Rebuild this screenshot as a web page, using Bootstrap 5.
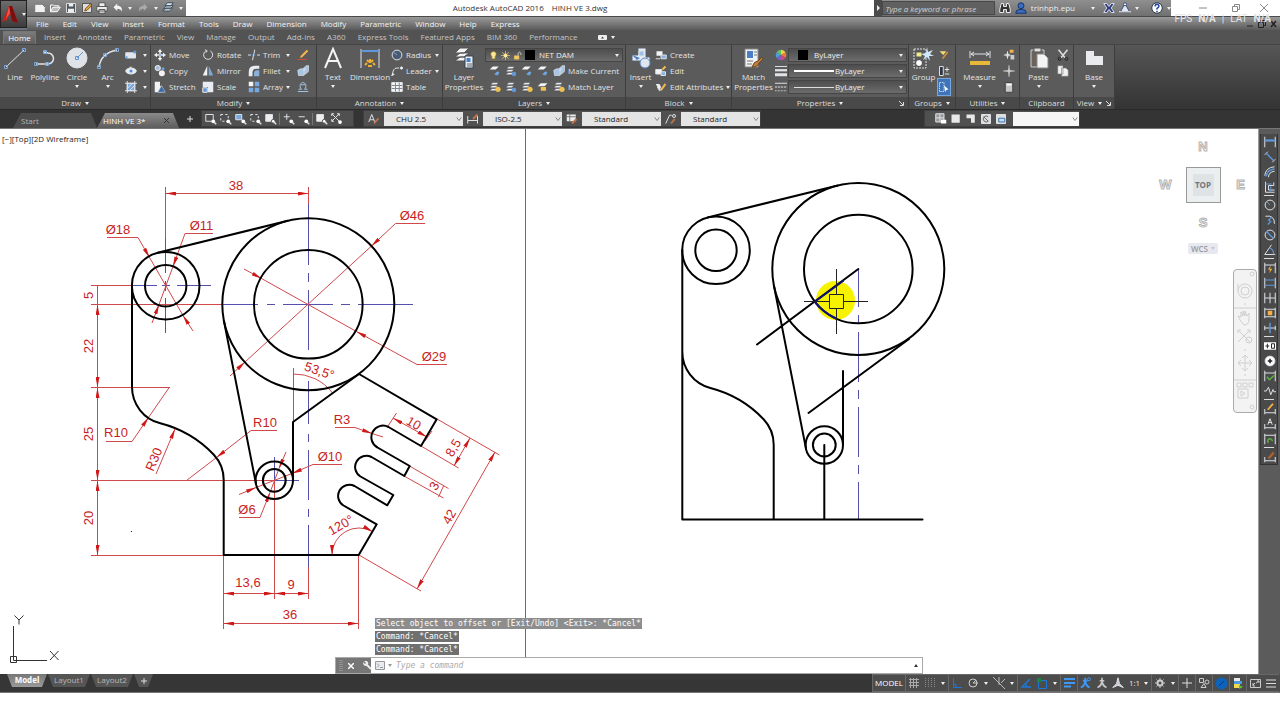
<!DOCTYPE html>
<html lang="en">
<head>
<meta charset="utf-8">
<meta name="viewport" content="width=device-width, initial-scale=1">
<title>Autodesk AutoCAD 2016 - HINH VE 3.dwg</title>
<link href="https://cdn.jsdelivr.net/npm/bootstrap@5.3.0/dist/css/bootstrap.min.css" rel="stylesheet">
<script src="https://cdn.jsdelivr.net/npm/bootstrap@5.3.0/dist/js/bootstrap.bundle.min.js"></script>
<style>
  :root { --ui: "Open Sans", "Noto Sans", sans-serif; --edge: #3d3d3d; --ink: #e4e4e4; }
  body { font: 8px/12px var(--ui); color: var(--ink); background: #fff; padding-bottom: 27px; overflow-x: hidden; }
  svg { display: block; flex: none; }
  .ic { width: 12px; height: 12px; fill: none; stroke: #dfe3e8; stroke-width: 1.3; }
  .ic-lg { width: 22px; height: 22px; fill: none; stroke: #dfe3e8; stroke-width: 1; }
  .tool, .tool:hover { --bs-btn-hover-color: #fff; padding: 0; border: 0; border-radius: 0; font: inherit; color: inherit; display: flex; align-items: center; white-space: nowrap; background: none; }
  .dn { width: 0; height: 0; border: solid transparent; border-width: 3px 2px 0; border-top-color: #eee; flex: none; }
  a { color: inherit; text-decoration: none; }

  /* title bar and menus */
  .app-btn, .app-btn:hover { width: 27px; height: 28px; border: 1px solid #222; background: linear-gradient(#6d6d6d, #3c3c3c); }
  .title-row { height: 16px; background: #fff; color: #333; }
  .qat { width: 159px; background: linear-gradient(#8b8b8b, #6f6f6f); padding-left: 5px; }
  .qat .tool { width: 16px; justify-content: center; }
  .qat .slim { width: 10px; }
  .info { width: 297px; background: linear-gradient(#8f8f8f, #707070); color: #eee; }
  .info .arrow { width: 9px; height: 16px; justify-content: center; background: #4b4b4b; }
  .find { width: 120px; height: 14px; background: #606060; border: 1px solid #484848; border-radius: 0; color: #eee; font: italic 8px/12px var(--ui); padding: 0 0 0 2px; }
  .find::placeholder { color: #d0d0d0; opacity: 1; }
  .win { width: 109px; }
  .menus { height: 14px; gap: 14px; padding-left: 9px; background: linear-gradient(#9a9a9a, #5a5a5a); border-top: 1px solid #4a4a4a; color: #f2f2f2; }
  .hud { top: 13px; right: 9px; font: 10px/12px Roboto, sans-serif; color: #e6e6e6; gap: 6px; z-index: 3; }
  .doc-win { gap: 4px; padding-right: 3px; }

  /* ribbon */
  .rtabs { height: 14px; background: #535353; color: #c4c4c4; padding-left: 3px; gap: 12px; }
  .rtabs .on { background: linear-gradient(#7c7c7c, #5e5e5e); color: #fff; padding: 0 4px; margin-right: -4px; border: 1px solid #777; border-bottom: 0; width: 33px; text-align: center; }
  .ribbon { height: 65px; background: linear-gradient(#565656, #343434); border-top: 1px solid #444; overflow: hidden; }
  .panel { border-right: 1px solid var(--edge); flex: none; background: #5b5b5b; display: flex; flex-direction: column; }
  .pbody { height: 52px; display: grid; padding-top: 2px; justify-items: start; align-content: start; }
  .ptitle, .ptitle:hover { height: 12px; background: #494949; justify-content: center; gap: 4px; position: relative; color: #dcdcdc; }
  .p-draw { width: 151px; } .p-draw .pbody { grid-template-columns: 30px 30px 34px 27px 29px; }
  .p-mod { width: 166px; } .p-mod .pbody { grid-template-columns: 48px 46px 49px 18px; padding-left: 3px; }
  .p-ann { width: 126px; } .p-ann .pbody { grid-template-columns: 32px 42px 50px; }
  .p-lay { width: 183px; } .p-lay .pbody { grid-template-columns: 42px 138px; }
  .p-blk { width: 106px; } .p-blk .pbody { grid-template-columns: 29px 76px; }
  .p-prop { width: 177px; } .p-prop .pbody { grid-template-columns: 43px 13px 120px; }
  .p-grp { width: 47px; } .p-grp .pbody { grid-template-columns: 29px 16px; }
  .p-util { width: 64px; } .p-util .pbody { grid-template-columns: 47px 16px; }
  .p-clip { width: 54px; } .p-clip .pbody { grid-template-columns: 37px 16px; }
  .p-view { width: 41px; } .p-view .pbody { grid-template-columns: 40px; }
  .bigt, .bigt:hover { flex-direction: column; justify-self: center; height: 48px; line-height: 10px; text-align: center; gap: 3px; white-space: normal; }
  .stack { display: grid; grid-auto-rows: 16px; align-content: start; }
  .stack .tool { gap: 3px; }
  .stack .ms { gap: 6px; }
  .quick { gap: 4px; }
  .combo { border: 1px solid #454545; background: linear-gradient(#4e4e4e, #6c6c6c); height: 14px; position: relative; display: flex; align-items: center; align-self: center; }
  .combo select { appearance: none; border: 0; background: none; color: #eee; font: inherit; width: 100%; padding: 0; height: 12px; }
  .combo .dn { position: absolute; right: 3px; pointer-events: none; }
  .lyr { width: 138px; } .lyr select { padding-left: 53px; }
  .lyr .lead-ic { position: absolute; left: 3px; gap: 3px; }
  .lyr .ic { width: 9px; height: 11px; }
  .prp { width: 119px; } .prp select { padding-left: 46px; }
  .prp.first select { padding-left: 25px; }
  .prp .lead-ic { position: absolute; left: 5px; }
  .lit { background: #3f74b8; outline: 1px solid #77a6dc; }

  /* document tabs and docked toolbars */
  .docks { height: 20px; background: #343434; border-top: 1px solid #2a2a2a; border-bottom: 1px solid #777; }
  .dtab { height: 15px; align-self: flex-end; padding: 0 6px; color: #b5b5b5; background: #4d4d4d; clip-path: polygon(8px 0, calc(100% - 6px) 0, 100% 100%, 0 100%); }
  .dtab.on { background: linear-gradient(#8a8a8a, #5d5d5d); color: #fff; }
  .dstart { width: 84px; padding-left: 8px; margin-left: 13px; } .dhinh { width: 82px; }
  .bar { background: #505050; height: 17px; display: flex; align-items: center; border: 1px solid #3f3f3f; align-self: flex-start; }
  .zoombar { width: 153px; padding-left: 1px; } .zoombar .tool { width: 15px; justify-content: center; }
  .vsep { width: 1px; height: 12px; background: #777; margin: 0 1px; }
  .stybar { margin-left: 9px; }
  .stybar .tool { width: 20px; justify-content: center; }
  .sty { appearance: none; width: 79px; height: 14px; border: 0; border-radius: 0; padding: 0 0 0 12px; color: #222; font: inherit;
    background: #e4e4e4 url("data:image/svg+xml,%3Csvg xmlns='http://www.w3.org/2000/svg' viewBox='0 0 8 8'%3E%3Cpath d='M1 2l3 4 3-4' fill='none' stroke='%23666'/%3E%3C/svg%3E") no-repeat right 1px center / 6px 6px; }
  .vpbar { width: 156px; margin-right: 200px; padding-left: 8px; } .vpbar .tool { width: 15px; justify-content: center; }
  .vpbar .sty { width: 66px; margin-left: 5px; background-color: #f6f6f6; }

  /* drawing area */
  .work { min-height: 300px; }
  .canvas { background: #fff; overflow: hidden; color: #222; }
  .side { width: 22px; background: #5b5b5b; border-left: 1px solid #999; padding: 5px 2px 0 1px; }
  .side .tool { height: 15px; width: 18px; justify-content: center; }
  .side hr { margin: 1px 3px; border: 0; border-top: 1px solid #ddd; opacity: 1; }
  .side-in { background: #4a4a4a; border: 1px solid #333; border-top: 0; }
  .vplabel { left: 2px; top: 4px; }
  .cube { top: 10px; right: 8px; width: 94px; color: #b8b8b8; font: bold 12px/16px "Liberation Sans", sans-serif; display: grid; grid-template-columns: 19px 56px 19px; justify-items: center; align-items: center; row-gap: 12px; }
  .ltr { color: #fafafa; -webkit-text-stroke: 1px #b4b4b4; font-size: 13px; }
  .face, .face:hover { width: 35px; height: 36px; border: 1px solid #999; background: #dfe3e6; box-shadow: inset 0 0 0 6px #eceff0; font: bold 8px/12px var(--ui); color: #70757a; justify-content: center; }
  .wcs, .wcs:hover { height: 11px; background: #e8e8f1; color: #999; gap: 3px; padding: 0 3px; border-radius: 2px; font: 8px/11px var(--ui); font-weight: 600; }
  .wcs .dn { border-top-color: #c4c4d4; }
  .nav-strip { right: 1px; top: 140px; width: 24px; height: 144px; border: 1px solid #aaa; border-radius: 4px; background: #f3f3f3; }
  .nav-strip svg { stroke: #cfcfcf; fill: none; }
  .cli { bottom: 0; left: 335px; width: 588px; font: 8px/12px "DejaVu Sans Mono", monospace; }
  .cli .hist { margin-left: 40px; gap: 2px; }
  .cli .hist span { background: #8d8d8d; color: #fff; height: 11px; line-height: 11px; padding: 0 1px; }
  .cli .hist span:last-child, .cli .hist span:nth-child(2) { background: #707070; }
  .cli-bar { height: 17px; border: 1px solid #aaa; background: #fff; margin-top: 2px; }
  .cli-grip { width: 35px; height: 15px; background: #767676; gap: 5px; padding-left: 3px; }
  .cli-bar > .dn { border-top-color: #999; margin-left: 3px; }
  .cli input { border: 0; outline: 0; font: italic 8px/12px "DejaVu Sans Mono", monospace; padding: 0; height: 12px; }
  .cli input::placeholder { color: #aaa; opacity: 1; }

  /* layout tabs and status bar */
  .foot { height: 19px; background: #363636; border-bottom: 1px solid #777; padding-left: 7px; }
  .ltab { height: 13px; background: #555; color: #b8b8b8; clip-path: polygon(0 0, 100% 0, calc(100% - 5px) 100%, 5px 100%); width: 42px; justify-content: center; line-height: 12px; margin-right: 1px; }
  .ltab.on { background: linear-gradient(#777, #9a9a9a); color: #fff; font-weight: bold; width: 40px; }
  .ltab.add { width: 19px; }
  .stat { background: #4c4c4c; height: 18px; padding-right: 1px; }
  .grp { display: flex; border: 1px solid #686868; border-right-width: 0; height: 18px; align-items: center; }
  .grp .tool { height: 16px; justify-content: center; width: 16px; }
  .grp .w-dn { width: 10px; }
  .grp .w-model { width: 32px; } .grp .w-scale { width: 25px; }
  .dwg text { font: 13px "Liberation Sans", Arial, sans-serif; fill: #c81e1e; text-anchor: middle; }
  .dwg .obj { fill: none; stroke: #000; stroke-width: 2; stroke-linejoin: round; stroke-linecap: round; }
  .dwg .dim { fill: none; stroke: #d0484a; stroke-width: 1; }
  .dwg .axis { fill: none; stroke: #5450ac; stroke-width: 1; }
</style>
</head>
<body class="d-flex flex-column min-vh-100">

<svg width="0" height="0" class="position-absolute" aria-hidden="true">
  <defs>
    <marker id="arr" viewBox="0 0 10 4" refX="10" refY="2" markerWidth="10" markerHeight="4" markerUnits="userSpaceOnUse" orient="auto-start-reverse"><path d="M0 0L10 2L0 4z" fill="#d01818"/></marker>
    <symbol id="new" viewBox="0 0 16 16"><path d="M1 3h10l4 4v7H1z" fill="#f2f2f2" stroke="#777"/></symbol>
    <symbol id="open" viewBox="0 0 16 16"><path d="M2 13V4h4l1 1h6v2" fill="none" stroke="#fff"/><path d="M2 13l3-6h10l-4 6z" fill="#bbb" stroke="#fff"/></symbol>
    <symbol id="save" viewBox="0 0 16 16"><path d="M2 2h12v12H2z" fill="#4c555e" stroke="#ddd"/><path d="M5 2h6v4H5zM4 9h8v5H4z" fill="#eee" stroke="none"/></symbol>
    <symbol id="saveas" viewBox="0 0 16 16"><path d="M2 2h12v12H2z" fill="#ddd" stroke="#555"/><path d="M5 12l1-3 6-6 2 2-6 6z" fill="#eaa742" stroke="#754a12"/></symbol>
    <symbol id="print" viewBox="0 0 16 16"><path d="M4 6V1h8v5M1 6h14v6H1zM4 10h8v5H4z" fill="#eee" stroke="#555"/></symbol>
    <symbol id="undo" viewBox="0 0 16 16"><path d="M2 7l5-5v3c5 0 7 3 6 8-1-3-3-4-6-4v3z" fill="#f4f4f4" stroke="none"/></symbol>
    <symbol id="redo" viewBox="0 0 16 16"><path d="M14 7L9 2v3c-5 0-7 3-6 8 1-3 3-4 6-4v3z" fill="#aaa" stroke="none"/></symbol>
    <symbol id="sheets" viewBox="0 0 16 16"><path d="M1 12l4-4h9l-4 4zM2 9l4-4h9l-4 4zM4 5l3-4h8l-3 4z" fill="#dce8f2" stroke="#3a4a58"/></symbol>
    <symbol id="rect" viewBox="0 0 16 16"><path d="M1 5h13v7H1z" fill="#dfe6f0"/><circle cx="2" cy="11" r="1.5" fill="#5a9be0" stroke="none"/><circle cx="13" cy="4" r="2" fill="#5a9be0" stroke="none"/></symbol>
    <symbol id="ell" viewBox="0 0 16 16"><ellipse cx="8" cy="8" rx="7" ry="4" fill="#e8edf4"/><circle cx="8" cy="8" r="2" fill="#4a8be0" stroke="none"/><path d="M8 2v4M8 4l-2-1"/></symbol>
    <symbol id="hatch" viewBox="0 0 16 16"><path d="M3 3h10v10H3z" fill="#7aa8dd"/><path d="M3 0v16M13 0v16M0 3h16M0 13h16M3 10l7-7M6 13l7-7"/></symbol>
    <symbol id="move" viewBox="0 0 16 16"><path d="M8 0l3 4H9v3h3V5l4 3-4 3V9H9v3h2l-3 4-3-4h2V9H4v2L0 8l4-3v2h3V4H5z" fill="#eef1f4" stroke="none"/><path d="M7 7h2v2H7z" fill="#4a8be0" stroke="none"/></symbol>
    <symbol id="copy" viewBox="0 0 16 16"><circle cx="5" cy="4" r="3.500" fill="#a9bfd8" stroke="#eee"/><circle cx="10.500" cy="11" r="4" fill="#f2f2f2" stroke="none"/><circle cx="12" cy="5" r="2" fill="#6fa3dd" stroke="none"/></symbol>
    <symbol id="stretch" viewBox="0 0 16 16"><path d="M1 1h7v5l6 9H1z" fill="#f0f2f4" stroke="none"/><path d="M5 15l5-9 5 9z" fill="#3b6ca8" stroke="#eee" stroke-width=".6"/></symbol>
    <symbol id="rotate" viewBox="0 0 16 16"><path d="M11 2.500A6 6 0 1 1 5 2.700M4 1l3 1.500L5 5"/></symbol>
    <symbol id="mirror" viewBox="0 0 16 16"><path d="M7 1v13H1z" fill="#f0f2f4" stroke="none"/><path d="M9 1v13h6z" fill="#7ba7d8" stroke="none"/></symbol>
    <symbol id="scale" viewBox="0 0 16 16"><path d="M1 1h14v14H8V8H1z" fill="#e8edf4" stroke="none"/><path d="M1 9h6v6H1z" fill="#5f97d8" stroke="#eee"/></symbol>
    <symbol id="trim" viewBox="0 0 16 16"><path d="M0 8h4M12 8h4M9 1L6 15"/><path d="M5 8h6" stroke="#5f97d8" stroke-dasharray="2 1"/></symbol>
    <symbol id="fillet" viewBox="0 0 16 16"><path d="M1 15V9q0-8 8-8h6v4h-4Q6 5 6 10v5z" fill="#e8edf4" stroke="none"/><path d="M8 15v-4q0-4 4-4h3v8z" fill="#8bb0dc" stroke="none"/></symbol>
    <symbol id="array" viewBox="0 0 16 16"><path d="M1 1h6v6H1z" fill="#f4f4f4" stroke="none"/><path d="M9 1h6v6H9zM1 9h6v6H1zM9 9h6v6H9z" fill="#78a8e0" stroke="none"/></symbol>
    <symbol id="pencil" viewBox="0 0 16 16"><path d="M1 14h12" stroke="#d05030"/><path d="M4 12l1-3 8-8 2 2-8 8z" fill="#f4b64c" stroke="none"/></symbol>
    <symbol id="blk3" viewBox="0 0 16 16"><path d="M1 7l4-2h6l-2 3v6H2zM9 4l3-3h4l-1 8-5 4z" fill="#a8c4e4" stroke="#e8eef4" stroke-width=".8"/></symbol>
    <symbol id="offset" viewBox="0 0 16 16"><path d="M1 14h14M2 11h4c-4-4-1-9 2-9s6 5 2 9h4M5 5h6" stroke="#a8c4e4"/></symbol>
    <symbol id="radius" viewBox="0 0 16 16"><circle cx="8" cy="8" r="6.500" fill="#4a5a70"/><path d="M3 4l5 4" stroke="#78a8e0"/></symbol>
    <symbol id="leader" viewBox="0 0 16 16"><path d="M2 14q0-10 6-10h3"/><path d="M0 15l2-5 3 3z" fill="#dfe3e8" stroke="none"/><circle cx="14" cy="4" r="1.500" fill="#fff"/></symbol>
    <symbol id="table" viewBox="0 0 16 16"><path d="M1 2h14v12H1z" fill="#f4f4f4"/><path d="M1 6h14M1 10h14M6 2v12M11 2v12" stroke="#7d8790"/></symbol>
    <symbol id="lay" viewBox="0 0 16 16"><path d="M1 6l4-4h8L9 6z" fill="#f2f4f6" stroke="none"/><path d="M7 13l3-4h4l-2 5z" fill="#6fa3dd" stroke="none"/></symbol>
    <symbol id="lay2" viewBox="0 0 16 16"><path d="M2 5l3-3h8l-3 3zM1 9l3-3h8L9 9zM1 13l3-3h8l-3 3z" fill="#e6eaee" stroke="#444" stroke-width=".6"/><circle cx="12" cy="12" r="3" fill="#5f97d8" stroke="none"/></symbol>
    <symbol id="lay3" viewBox="0 0 16 16"><path d="M2 5l3-3h8l-3 3zM1 9l3-3h8L9 9zM1 13l3-3h8l-3 3z" fill="#e6eaee" stroke="#444" stroke-width=".6"/><circle cx="12" cy="11" r="3.500" fill="#f0c050" stroke="none"/></symbol>
    <symbol id="bulb" viewBox="0 0 16 16"><path d="M5 10C1 5 4 1 8 1s7 4 3 9v4H5z" fill="#fbe89a" stroke="#8a7020"/></symbol>
    <symbol id="sun" viewBox="0 0 16 16"><path d="M8 0v16M0 8h16M2 2l12 12M14 2L2 14" stroke="#e8c860"/><circle cx="8" cy="8" r="3.500" fill="#fbe89a" stroke="none"/></symbol>
    <symbol id="lock" viewBox="0 0 16 16"><path d="M9 8V4q3-4 5 0v3" stroke="#eee"/><path d="M2 8h9v7H2z" fill="#f0c860" stroke="none"/></symbol>
    <symbol id="bcreate" viewBox="0 0 16 16"><path d="M2 3h8v6H2z" fill="#f2f4f6" stroke="none"/><path d="M8 8h7v5H8z" fill="#8bb0dc"/><path d="M1 13h6"/></symbol>
    <symbol id="bedit" viewBox="0 0 16 16"><path d="M1 6h8v6H1z" fill="#f2f4f6"/><path d="M8 9h6v5H8z" fill="#8bb0dc"/><path d="M9 5l4-4 2 2-4 4z" fill="#f4b64c" stroke="none"/></symbol>
    <symbol id="battr" viewBox="0 0 16 16"><path d="M1 4h5l2 4-2 5z" fill="#eee" stroke="none"/><path d="M7 11l6-8 2 2-6 8z" fill="#f4b64c" stroke="none"/><path d="M3 8l3 5 3-2"/></symbol>
    <symbol id="wheel" viewBox="0 0 16 16"><g stroke="none"><path d="M8 8V1a7 7 0 0 1 6 3.500z" fill="#f4d044"/><path d="M8 8l6-3.500a7 7 0 0 1 0 7z" fill="#ec7b34"/><path d="M8 8l6 3.500A7 7 0 0 1 8 15z" fill="#d34878"/><path d="M8 8v7a7 7 0 0 1-6-3.500z" fill="#7c60c8"/><path d="M8 8l-6 3.500a7 7 0 0 1 0-7z" fill="#49a0dc"/><path d="M8 8L2 4.500A7 7 0 0 1 8 1z" fill="#64c060"/></g></symbol>
    <symbol id="lwt" viewBox="0 0 16 16"><path d="M0 2h16" /><path d="M0 7h16" stroke-width="3"/><path d="M0 13h16" stroke-width="4"/></symbol>
    <symbol id="ltp" viewBox="0 0 16 16"><path d="M0 3h16"/><path d="M0 8h16" stroke-dasharray="3 1"/><path d="M0 13h16" stroke-dasharray="1 1"/></symbol>
    <symbol id="gsel" viewBox="0 0 16 16"><path d="M2 2h6v12H2z" stroke-dasharray="2 1" stroke="#cde"/><path d="M8 6l6 5-3 1-1 3z" fill="#fff" stroke="none"/></symbol>
    <symbol id="gpm" viewBox="0 0 16 16"><path d="M2 2h5v12H2z" fill="#2c3440"/><path d="M12 3v6M9 6h6M9 12h6"/></symbol>
    <symbol id="gedit" viewBox="0 0 16 16"><path d="M2 3h9l-4 5z" fill="#f4e070" stroke="none"/><path d="M6 13l7-9" stroke="#d89040" stroke-width="2"/></symbol>
    <symbol id="idp" viewBox="0 0 16 16"><path d="M1 8h9M6 3v10"/><circle cx="6" cy="8" r="2"/><path d="M9 1h5v4H9z" fill="#f4b64c" stroke="none"/><path d="M10 8h5v6h-5z" fill="#ccc" stroke="none"/></symbol>
    <symbol id="pt" viewBox="0 0 16 16"><path d="M8 0l1 7 7 1-7 1-1 7-1-7-7-1 7-1z" fill="#ddd" stroke="#ccc" stroke-width=".5"/></symbol>
    <symbol id="calc" viewBox="0 0 16 16"><path d="M3 2h10v13H3z" fill="#c8c8c8" stroke="#444"/><path d="M5 4h6v2H5z" fill="#fff" stroke="none"/></symbol>
    <symbol id="cut" viewBox="0 0 16 16"><path d="M2 1l9 11M14 1L5 12" stroke="#ddd" stroke-width="2"/><circle cx="3.500" cy="13" r="2" stroke="#222"/><circle cx="12.500" cy="13" r="2" stroke="#222"/></symbol>
    <symbol id="pages" viewBox="0 0 16 16"><path d="M1 1h7v11H1zM6 4h6l3 3v8H6z" fill="#f2f2f2" stroke="#777" stroke-width=".8"/></symbol>
    <symbol id="zm" viewBox="0 0 16 16"><path d="M1 2h10v9H1z"/><circle cx="11" cy="11" r="2.500" fill="#fff" stroke="none"/><path d="M12 12l3 3" stroke-width="2"/></symbol>
    <symbol id="zd" viewBox="0 0 16 16"><path d="M1 2h10v9H1z" stroke-dasharray="3 3"/><circle cx="11" cy="11" r="2.500" fill="#fff" stroke="none"/><path d="M12 12l3 3" stroke-width="2"/></symbol>
    <symbol id="zs" viewBox="0 0 16 16"><path d="M1 2h8v7H1z" fill="#7aa8dd"/><circle cx="11" cy="11" r="2.500" fill="#fff" stroke="none"/><path d="M12 12l3 3" stroke-width="2"/></symbol>
    <symbol id="zo" viewBox="0 0 16 16"><path d="M1 2h9v9H1z" fill="#eee"/><circle cx="11" cy="11" r="2.500" fill="#fff" stroke="#555"/><path d="M12 12l3 3" stroke-width="2"/></symbol>
    <symbol id="zp" viewBox="0 0 16 16"><path d="M5 1v8M1 5h8"/><circle cx="11" cy="11" r="2.500" fill="#fff" stroke="none"/><path d="M12 12l3 3" stroke-width="2"/></symbol>
    <symbol id="zn" viewBox="0 0 16 16"><path d="M1 5h8"/><circle cx="11" cy="11" r="2.500" fill="#fff" stroke="none"/><path d="M12 12l3 3" stroke-width="2"/></symbol>
    <symbol id="zx" viewBox="0 0 16 16"><path d="M1 1l10 10M11 1L1 11M1 4V1h3M11 4V1H8M1 8v3h3"/><circle cx="12" cy="12" r="2.500" fill="#fff" stroke="none"/></symbol>
    <symbol id="abr" viewBox="0 0 16 16"><path d="M1 12L5 2l4 10M2.500 9h5"/><path d="M8 14l6-7" stroke="#c0724a" stroke-width="2.500"/></symbol>
    <symbol id="dbr" viewBox="0 0 16 16"><path d="M1 4v10M14 4v10M1 10h13"/><path d="M8 8l6-6" stroke="#c0724a" stroke-width="2.500"/></symbol>
    <symbol id="tbr" viewBox="0 0 16 16"><path d="M1 2h12v9H1z" fill="#eee" stroke="none"/><path d="M1 5h12M5 2v9" stroke="#777"/><path d="M8 14l6-6" stroke="#c0724a" stroke-width="2.500"/></symbol>
    <symbol id="lbr" viewBox="0 0 16 16"><path d="M1 14L6 3h3"/><circle cx="12" cy="4" r="2"/><path d="M8 14l5-6" stroke="#c0724a" stroke-width="2.500"/></symbol>
    <symbol id="vp" viewBox="0 0 16 16"><path d="M2 2h11v11H2z" fill="#e8e8e8" stroke="none"/></symbol>
    <symbol id="vp4" viewBox="0 0 16 16"><path d="M1 1h11v11H1zM6.500 1v11M1 6.500h11" fill="#999"/><path d="M8 9h7v5H8z" fill="#fff" stroke="none"/></symbol>
    <symbol id="vpl" viewBox="0 0 16 16"><path d="M2 2h11v11H8V7H2z" fill="#e8e8e8" stroke="none"/></symbol>
    <symbol id="vpc" viewBox="0 0 16 16"><path d="M2 2h12v12H2z" fill="#ddd"/><path d="M5 5l6 6M11 5a4 4 0 1 0 0 6" stroke="#666"/></symbol>
    <symbol id="vpb" viewBox="0 0 16 16"><path d="M2 2h12v12H2z" fill="#ddd"/><path d="M5 7h8v5H5z" fill="#c4dcf4" stroke="#3a74b4"/></symbol>
    <symbol id="d1" viewBox="0 0 16 16"><path d="M1 1v14M15 1v14"/><path d="M1 6h14" stroke="#5f97d8" stroke-width="3"/></symbol>
    <symbol id="d2" viewBox="0 0 16 16"><path d="M1 5l4-4M11 15l4-4"/><path d="M3 3l10 10" stroke="#5f97d8" stroke-width="2"/></symbol>
    <symbol id="d3" viewBox="0 0 16 16"><path d="M1 13Q2 2 14 1M6 15q0-7 8-8"/><path d="M3 14Q4 5 14 4" stroke="#5f97d8" stroke-width="2"/></symbol>
    <symbol id="d4" viewBox="0 0 16 16"><path d="M2 1v14h12M6 12V6h7V2M6 12h8"/><path d="M2 4h8M9 15V7" stroke="#5f97d8"/></symbol>
    <symbol id="d5" viewBox="0 0 16 16"><circle cx="8" cy="8" r="6.500"/><path d="M4 4l4 4" stroke="#5f97d8"/></symbol>
    <symbol id="d6" viewBox="0 0 16 16"><path d="M2 3q12-2 12 10"/><path d="M5 14l4-4-3-2 5-4" stroke="#5f97d8" stroke-width="1.600"/></symbol>
    <symbol id="d7" viewBox="0 0 16 16"><circle cx="8" cy="8" r="6.500"/><path d="M3 3l10 10" stroke="#5f97d8" stroke-width="2"/></symbol>
    <symbol id="d8" viewBox="0 0 16 16"><path d="M10 1L1 14h14"/><path d="M7 5q6 2 6 9" stroke="#5f97d8" stroke-width="1.600"/></symbol>
    <symbol id="d9" viewBox="0 0 16 16"><path d="M1 1v14M15 1v14M1 4h14"/><path d="M9 5l-4 5h3l-1 5 4-6H8z" fill="#f4b040" stroke="none"/></symbol>
    <symbol id="d10" viewBox="0 0 16 16"><path d="M1 1v14M15 1v14"/><path d="M1 4h14M1 11h14" stroke="#5f97d8" stroke-width="1.600"/></symbol>
    <symbol id="d11" viewBox="0 0 16 16"><path d="M1 1v14M15 1v14M8 1v14M1 8h14"/></symbol>
    <symbol id="d12" viewBox="0 0 16 16"><path d="M1 1v14M15 1v14M1 3h14M1 13h14"/><path d="M5 5h6v6H5z" fill="#f4b040" stroke="none"/></symbol>
    <symbol id="d13" viewBox="0 0 16 16"><path d="M1 8h14M1 5v6M15 5v6"/><path d="M8 1v14" stroke="#5f97d8" stroke-width="2"/></symbol>
    <symbol id="d14" viewBox="0 0 16 16"><path d="M0 3h16v10H0z" fill="#fff" stroke="none"/><path d="M2 8h5M4.500 5v6M10 5h4v6h-4z" stroke="#222"/></symbol>
    <symbol id="d15" viewBox="0 0 16 16"><circle cx="8" cy="8" r="6.500" fill="#fff"/><path d="M8 5v6M5 8h6" stroke="#222" stroke-width="2"/></symbol>
    <symbol id="d16" viewBox="0 0 16 16"><path d="M1 1v14M15 1v14M1 4h14"/><path d="M4 9l3 4 7-6" stroke="#5cb040" stroke-width="2"/></symbol>
    <symbol id="d17" viewBox="0 0 16 16"><path d="M0 8h3l3-5 3 10 3-7 1 3h3"/></symbol>
    <symbol id="d18" viewBox="0 0 16 16"><path d="M1 8v7M15 8v7M1 13h14"/><path d="M5 9l7-8" stroke="#f4b040" stroke-width="2.500"/></symbol>
    <symbol id="d19" viewBox="0 0 16 16"><path d="M1 8v7M15 8v7M1 13h14M5 9l3-8 3 8M6 6h4"/></symbol>
    <symbol id="d20" viewBox="0 0 16 16"><path d="M1 1v14M15 1v14M1 3h14"/><path d="M6 13a3 3 0 1 1 5-2" stroke="#5cb040" stroke-width="2"/></symbol>
    <symbol id="d21" viewBox="0 0 16 16"><path d="M1 8v7M15 8v7M1 13h14"/><path d="M6 10l7-8" stroke="#b0622c" stroke-width="3"/></symbol>
    <symbol id="person" viewBox="0 0 16 16"><path d="M8 1v4M2 14q5-2 6-8 1 6 6 8M5 5h6" stroke="#c8c8c8" stroke-width="2.200"/></symbol>
    <symbol id="personb" viewBox="0 0 16 16"><path d="M7 1v4M1 14q5-2 6-8 1 6 6 8M4 5h6" stroke="#3f98f4" stroke-width="2.400"/><circle cx="12" cy="3" r="2" stroke="#3f98f4"/></symbol>
  </defs>
</svg>

<header class="d-flex position-relative bg-secondary">
  <button class="btn tool app-btn" aria-label="Application menu"><svg width="17" height="20" viewBox="0 0 17 20"><path d="M8 2L1 18l5-2 3-7 2 8 6 2L11 2z" fill="#c8201c"/><path d="M8 2l3 0 6 17-6-2z" fill="#7c0f10"/><path d="M8 2L5 15l4-6z" fill="#f0564a"/></svg><span class="dn ms-1"></span></button>
  <div class="flex-fill">
    <div class="title-row d-flex">
      <div class="qat d-flex align-items-center">
        <button class="btn tool" aria-label="New"><svg class="ic"><use href="#new"/></svg></button><button class="btn tool" aria-label="Open"><svg class="ic"><use href="#open"/></svg></button><button class="btn tool" aria-label="Save"><svg class="ic"><use href="#save"/></svg></button><button class="btn tool" aria-label="Save as"><svg class="ic"><use href="#saveas"/></svg></button><button class="btn tool" aria-label="Plot"><svg class="ic"><use href="#print"/></svg></button><button class="btn tool" aria-label="Undo"><svg class="ic"><use href="#undo"/></svg></button><button class="btn tool slim" aria-label="Undo list"><span class="dn"></span></button><button class="btn tool" aria-label="Redo"><svg class="ic"><use href="#redo"/></svg></button><button class="btn tool slim" aria-label="Redo list"><span class="dn"></span></button><button class="btn tool" aria-label="Sheet sets"><svg class="ic"><use href="#sheets"/></svg></button><button class="btn tool slim" aria-label="Customize"><span class="dn"></span></button>
      </div>
      <div class="flex-fill d-flex justify-content-center align-items-center gap-2"><span>Autodesk AutoCAD 2016</span><span>HINH VE 3.dwg</span></div>
      <div class="info d-flex align-items-center">
        <button class="btn tool arrow" aria-label="Collapse search"><svg width="5" height="6" viewBox="0 0 5 6"><path d="M1 0l3 3-3 3z" fill="#eee"/></svg></button>
        <input class="find" type="text" placeholder="Type a keyword or phrase" aria-label="Search">
        <button class="btn tool ms-1" aria-label="Find"><svg class="ic" viewBox="0 0 16 16"><path d="M3 2h3v4h4V2h3l2 8v4h-5v-4H6v4H1v-4z" fill="#333" stroke="#eee"/></svg></button>
        <button class="btn tool ms-1 gap-1" aria-label="Account"><svg class="ic" viewBox="0 0 16 16"><circle cx="8" cy="5" r="4" fill="#3c6cc0" stroke="#16346c"/><path d="M1 15q0-5 5-5h4q5 0 5 5z" fill="#3c6cc0" stroke="#16346c"/></svg>trinhph.epu</button>
        <span class="dn ms-3"></span>
        <button class="btn tool ms-2" aria-label="Exchange"><svg class="ic" viewBox="0 0 16 16"><path d="M1 2h4l3 4 3-4h4l-4 6 4 6h-4l-3-4-3 4H1l4-6z" fill="#2c3f78" stroke="#dde"/></svg></button>
        <button class="btn tool ms-1 gap-1" aria-label="A360"><svg class="ic" viewBox="0 0 16 16"><path d="M8 2l6 11H2z" fill="#e4e8f0" stroke="#334a80"/><circle cx="8" cy="3" r="2" fill="#fff" stroke="#334a80"/><path d="M0 13h16" stroke="#eee"/></svg><span class="dn"></span></button>
        <button class="btn tool ms-2 ps-1 gap-1" aria-label="Help"><svg class="ic" viewBox="0 0 16 16"><circle cx="8" cy="8" r="7" fill="#fff" stroke="#234"/><path d="M5.500 6q0-3 2.500-3t2.500 2.500Q10.500 7 8 8.500V10M8 11.500v2" stroke="#24469c" stroke-width="2"/></svg><span class="dn"></span></button>
      </div>
      <div class="win d-flex align-items-center justify-content-between ps-4 pe-2">
        <button class="btn tool ms-1" aria-label="Minimize"><svg width="8" height="8" stroke="#888"><path d="M0 4h8"/></svg></button>
        <button class="btn tool ms-1" aria-label="Restore"><svg width="8" height="8" fill="none" stroke="#888"><path d="M.5 2.500h5v5h-5zM2.500 2V.5h5v5H6"/></svg></button>
        <button class="btn tool pe-1" aria-label="Close"><svg width="8" height="8" stroke="#888"><path d="M0 0l8 8M8 0L0 8"/></svg></button>
      </div>
    </div>
    <div class="menus d-flex align-items-center">
      <a href="#">File</a><a href="#">Edit</a><a href="#">View</a><a href="#">Insert</a><a href="#">Format</a><a href="#">Tools</a><a href="#">Draw</a><a href="#">Dimension</a><a href="#">Modify</a><a href="#">Parametric</a><a href="#">Window</a><a href="#">Help</a><a href="#">Express</a>
      <div class="doc-win d-flex ms-auto">
        <button class="btn tool" aria-label="Minimize drawing"><svg width="8" height="8" stroke="#222"><path d="M1 6h6"/></svg></button><button class="btn tool" aria-label="Restore drawing"><svg width="8" height="8" fill="none" stroke="#222"><path d="M.5 2.500h5v5h-5zM2.500 2V.5h5v5H6"/></svg></button><button class="btn tool" aria-label="Close drawing"><svg width="7" height="8" stroke="#222" stroke-width="1.500"><path d="M1 1l5 6M6 1L1 7"/></svg></button>
      </div>
    </div>
  </div>
  <div class="hud position-absolute d-flex"><span>FPS</span><b>N/A</b><span>|</span><span>LAT</span><b>N/A</b></div>
</header>

<nav class="rtabs d-flex align-items-center" aria-label="Ribbon">
  <a class="on" href="#">Home</a><a href="#">Insert</a><a href="#">Annotate</a><a href="#">Parametric</a><a href="#">View</a><a href="#">Manage</a><a href="#">Output</a><a href="#">Add-ins</a><a href="#">A360</a><a href="#">Express Tools</a><a href="#">Featured Apps</a><a href="#">BIM 360</a><a href="#">Performance</a>
  <button class="btn tool ms-2 gap-1" aria-label="Minimize ribbon"><svg width="9" height="5"><rect width="9" height="5" rx="1" fill="#eee"/><path d="M3 3.500h3L4.500 1.500z" fill="#444"/></svg><span class="dn"></span></button>
</nav>

<main class="ribbon d-flex">
  <section class="panel p-draw">
    <div class="pbody">
      <button class="btn tool bigt"><svg class="ic-lg" viewBox="0 0 22 22"><path d="M2 20L20 3"/><path d="M.5 18.500h3v3h-3zM18.500 1.500h3v3h-3z" stroke="#78a8e0"/></svg>Line</button>
      <button class="btn tool bigt"><svg class="ic-lg" viewBox="0 0 22 22"><path d="M2 17h12a5.500 5.500 0 0 0 0-11l-4-1" stroke-width="1.500"/><path d="M.5 15.500h3v3h-3zM11.500 15.500h3v3h-3zM9.500 3.500h3v3h-3z" stroke="#78a8e0"/></svg>Polyline</button>
      <button class="btn tool bigt"><svg class="ic-lg" viewBox="0 0 22 22"><circle cx="11" cy="11" r="10" fill="#dfe3e8"/><path d="M11 11l6-6M9.500 9.500h3v3h-3z" stroke="#5f97d8"/></svg>Circle<span class="dn"></span></button>
      <button class="btn tool bigt"><svg class="ic-lg" viewBox="0 0 22 22"><path d="M2 20Q4 6 20 3" stroke-width="1.500"/><path d="M.5 18.500h3v3h-3zM6.500 6.500h3v3h-3zM18.500 1.500h3v3h-3z" stroke="#78a8e0"/></svg>Arc<span class="dn"></span></button>
      <div class="stack ps-1">
        <button class="btn tool ms" aria-label="Rectangle"><svg class="ic"><use href="#rect"/></svg><span class="dn"></span></button><button class="btn tool ms" aria-label="Ellipse"><svg class="ic"><use href="#ell"/></svg><span class="dn"></span></button><button class="btn tool ms" aria-label="Hatch"><svg class="ic"><use href="#hatch"/></svg><span class="dn"></span></button>
      </div>
    </div>
    <button class="btn tool ptitle">Draw<span class="dn"></span></button>
  </section>
  <section class="panel p-mod">
    <div class="pbody">
      <div class="stack"><button class="btn tool"><svg class="ic"><use href="#move"/></svg>Move</button><button class="btn tool"><svg class="ic"><use href="#copy"/></svg>Copy</button><button class="btn tool"><svg class="ic"><use href="#stretch"/></svg>Stretch</button></div>
      <div class="stack"><button class="btn tool"><svg class="ic"><use href="#rotate"/></svg>Rotate</button><button class="btn tool"><svg class="ic"><use href="#mirror"/></svg>Mirror</button><button class="btn tool"><svg class="ic"><use href="#scale"/></svg>Scale</button></div>
      <div class="stack w-100"><button class="btn tool pe-2"><svg class="ic"><use href="#trim"/></svg><span class="flex-fill text-start">Trim</span><span class="dn"></span></button><button class="btn tool pe-2"><svg class="ic"><use href="#fillet"/></svg><span class="flex-fill text-start">Fillet</span><span class="dn"></span></button><button class="btn tool pe-2"><svg class="ic"><use href="#array"/></svg><span class="flex-fill text-start">Array</span><span class="dn"></span></button></div>
      <div class="stack"><button class="btn tool" aria-label="Erase"><svg class="ic"><use href="#pencil"/></svg></button><button class="btn tool" aria-label="Explode"><svg class="ic"><use href="#blk3"/></svg></button><button class="btn tool" aria-label="Offset"><svg class="ic"><use href="#offset"/></svg></button></div>
    </div>
    <button class="btn tool ptitle">Modify<span class="dn"></span></button>
  </section>
  <section class="panel p-ann">
    <div class="pbody">
      <button class="btn tool bigt"><svg class="ic-lg" viewBox="0 0 22 22"><path d="M3 21L11 2l8 19M6 14h10" stroke="#f4f4f4" stroke-width="2"/></svg>Text<span class="dn"></span></button>
      <button class="btn tool bigt"><svg class="ic-lg" viewBox="0 0 22 22"><path d="M2 2v19M20 2v19"/><path d="M2 4h18" stroke="#5f97d8" stroke-width="2"/><path d="M6 18l2-2M11 12v4M16 18l-2-2M8 13l2 2M14 13l-2 2M9 19h4" stroke="#f0b030" stroke-width="2"/></svg>Dimension</button>
      <div class="stack w-100"><button class="btn tool pe-1"><svg class="ic"><use href="#radius"/></svg><span class="flex-fill text-start">Radius</span><span class="dn"></span></button><button class="btn tool pe-1"><svg class="ic"><use href="#leader"/></svg><span class="flex-fill text-start">Leader</span><span class="dn"></span></button><button class="btn tool"><svg class="ic"><use href="#table"/></svg>Table</button></div>
    </div>
    <button class="btn tool ptitle">Annotation<span class="dn"></span></button>
  </section>
  <section class="panel p-lay">
    <div class="pbody">
      <button class="btn tool bigt"><svg class="ic-lg" viewBox="0 0 22 22"><path d="M2 6l5-5h9l-5 5zM2 10l5-4h9l-5 4zM2 14l5-4h9l-5 4z" fill="#f0f2f4" stroke="#555"/><path d="M12 9h8v12h-8z" fill="#e8edf4" stroke="#345"/><path d="M13.500 11h4v4h-4z" fill="#4a7fc8" stroke="none"/><path d="M14 17h5M14 19h5" stroke="#666"/></svg>Layer<br>Properties</button>
      <div class="stack">
        <div class="combo lyr"><span class="lead-ic d-flex align-items-center"><svg class="ic"><use href="#bulb"/></svg><svg class="ic"><use href="#sun"/></svg><svg class="ic"><use href="#lock"/></svg><svg width="10" height="10"><rect width="10" height="10"/></svg></span><select aria-label="Layer"><option>NET DAM</option></select><span class="dn"></span></div>
        <div class="d-flex quick ps-1"><button class="btn tool" aria-label="Layer off"><svg class="ic"><use href="#lay"/></svg></button><button class="btn tool" aria-label="Isolate"><svg class="ic"><use href="#lay2"/></svg></button><button class="btn tool" aria-label="Freeze"><svg class="ic"><use href="#lay"/></svg></button><button class="btn tool" aria-label="Lock"><svg class="ic"><use href="#lay"/></svg></button><button class="btn tool"><svg class="ic"><use href="#blk3"/></svg>Make Current</button></div>
        <div class="d-flex quick ps-1"><button class="btn tool" aria-label="Layers on"><svg class="ic"><use href="#lay3"/></svg></button><button class="btn tool" aria-label="Unisolate"><svg class="ic"><use href="#lay2"/></svg></button><button class="btn tool" aria-label="Thaw"><svg class="ic"><use href="#lay3"/></svg></button><button class="btn tool" aria-label="Unlock"><svg class="ic" viewBox="0 0 16 16"><path d="M1 7l4-4h9l-4 4z" fill="#f2f4f6" stroke="none"/><path d="M5 8h7v5H5z" fill="#f0c050" stroke="none"/></svg></button><button class="btn tool"><svg class="ic"><use href="#lay3"/></svg>Match Layer</button></div>
      </div>
    </div>
    <button class="btn tool ptitle">Layers<span class="dn"></span></button>
  </section>
  <section class="panel p-blk">
    <div class="pbody">
      <button class="btn tool bigt"><svg class="ic-lg" viewBox="0 0 22 22"><path d="M8 1h8v9h4v9h-8v-5H2V8h6z" fill="#e8edf4" stroke="#567"/><path d="M9 4h5v5H9z" fill="#9cc0e8"/><circle cx="15" cy="16" r="5" fill="#dfe6f0" stroke="#5a88c0"/><path d="M2 8l8 3-3 2z" fill="#4a7fc8" stroke="none"/></svg>Insert<span class="dn"></span></button>
      <div class="stack"><button class="btn tool"><svg class="ic"><use href="#bcreate"/></svg>Create</button><button class="btn tool"><svg class="ic"><use href="#bedit"/></svg>Edit</button><button class="btn tool"><svg class="ic"><use href="#battr"/></svg>Edit Attributes<span class="dn"></span></button></div>
    </div>
    <button class="btn tool ptitle">Block<span class="dn"></span></button>
  </section>
  <section class="panel p-prop">
    <div class="pbody">
      <button class="btn tool bigt"><svg class="ic-lg" viewBox="0 0 22 22"><path d="M3 2h13v18H3z" fill="#f0f2f4" stroke="#888"/><path d="M5 4h6v7H5z" fill="#4a7fc8" stroke="none"/><path d="M12 5h3M12 8h3M5 14h6M5 17h5" stroke="#777"/><path d="M10 20q2-6 6-6l4-4 1 2-4 4q-1 4-7 4z" fill="#c0803c" stroke="#6c4418"/></svg>Match<br>Properties</button>
      <div class="stack"><button class="btn tool" aria-label="Color"><svg class="ic"><use href="#wheel"/></svg></button><button class="btn tool" aria-label="Lineweight"><svg class="ic"><use href="#lwt"/></svg></button><button class="btn tool" aria-label="Linetype"><svg class="ic"><use href="#ltp"/></svg></button></div>
      <div class="stack">
        <div class="combo prp first"><svg class="lead-ic ms-1" width="10" height="10"><rect width="10" height="10"/></svg><select aria-label="Object color"><option>ByLayer</option></select><span class="dn"></span></div>
        <div class="combo prp"><svg class="lead-ic" width="40" height="4"><path d="M0 2h40" stroke="#fff" stroke-width="2"/></svg><select aria-label="Lineweight"><option>ByLayer</option></select><span class="dn"></span></div>
        <div class="combo prp"><svg class="lead-ic" width="40" height="3"><path d="M0 1.500h40" stroke="#ddd"/></svg><select aria-label="Linetype"><option>ByLayer</option></select><span class="dn"></span></div>
      </div>
    </div>
    <button class="btn tool ptitle">Properties<span class="dn"></span><svg class="position-absolute end-0 me-1" width="5" height="5" stroke="#ddd" fill="none"><path d="M0 0l4 4M4.500 1v3.500H1"/></svg></button>
  </section>
  <section class="panel p-grp">
    <div class="pbody">
      <button class="btn tool bigt"><svg class="ic-lg" viewBox="0 0 22 22"><path d="M2 2h12v19H2z" stroke-dasharray="2 1"/><path d="M4 5h6v5H4z" fill="#f4ec90" stroke="#555"/><circle cx="7" cy="16" r="3.500" fill="#fff" stroke="#444"/><path d="M15 0l1 5 5-2-3 4 4 2-5 0 1 5-3-4-4 3 2-4-4-2 5-1z" fill="#cfe9fb" stroke="none"/></svg>Group</button>
      <div class="stack"><button class="btn tool" aria-label="Group edit"><svg class="ic"><use href="#gedit"/></svg></button><button class="btn tool" aria-label="Ungroup"><svg class="ic"><use href="#gpm"/></svg></button><button class="btn tool lit" aria-label="Group selection"><svg class="ic"><use href="#gsel"/></svg></button></div>
    </div>
    <button class="btn tool ptitle">Groups<span class="dn"></span></button>
  </section>
  <section class="panel p-util">
    <div class="pbody">
      <button class="btn tool bigt"><svg class="ic-lg" viewBox="0 0 22 22"><path d="M1 4v7M21 4v7M2 7h18M5 5L2 7l3 2M17 5l3 2-3 2"/><path d="M1 14h20v4H1z" fill="#e8b838" stroke="none"/></svg>Measure<span class="dn"></span></button>
      <div class="stack"><button class="btn tool" aria-label="Quick select"><svg class="ic"><use href="#idp"/></svg></button><button class="btn tool" aria-label="Point"><svg class="ic"><use href="#pt"/></svg></button><button class="btn tool" aria-label="Calculator"><svg class="ic"><use href="#calc"/></svg></button></div>
    </div>
    <button class="btn tool ptitle">Utilities<span class="dn"></span></button>
  </section>
  <section class="panel p-clip">
    <div class="pbody">
      <button class="btn tool bigt"><svg class="ic-lg" viewBox="0 0 22 22"><path d="M3 3h13v17H3z" fill="#6a625c" stroke="#ccc"/><path d="M6 1h7v4H6z" fill="#ddd" stroke="#555"/><path d="M9 7h7l4 4v10H9z" fill="#f4f4f4" stroke="#888"/></svg>Paste<span class="dn"></span></button>
      <div class="stack"><button class="btn tool" aria-label="Cut"><svg class="ic"><use href="#cut"/></svg></button><button class="btn tool" aria-label="Copy clip"><svg class="ic"><use href="#pages"/></svg></button></div>
    </div>
    <button class="btn tool ptitle">Clipboard</button>
  </section>
  <section class="panel p-view">
    <div class="pbody">
      <button class="btn tool bigt"><svg class="ic-lg" viewBox="0 0 22 22"><path d="M3 4h8v5h9v9H3z" fill="#e8eaee" stroke="none"/></svg>Base<span class="dn"></span></button>
    </div>
    <button class="btn tool ptitle">View<span class="dn"></span><svg width="5" height="5" stroke="#ddd" fill="none"><path d="M0 0l4 4M4.500 1v3.500H1"/></svg></button>
  </section>
</main>

<div class="docks d-flex align-items-center">
  <a class="dtab dstart d-flex align-items-center" href="#">Start</a>
  <div class="dtab dhinh on d-flex align-items-center justify-content-between"><a href="#">HINH VE 3*</a><button class="btn tool me-1" aria-label="Close tab"><svg width="5" height="5" stroke="#333"><path d="M0 0l5 5M5 0L0 5"/></svg></button></div>
  <button class="btn tool px-2" aria-label="New tab"><svg width="6" height="6" stroke="#ddd"><path d="M3 0v6M0 3h6"/></svg></button>
  <div class="bar zoombar">
    <button class="btn tool" aria-label="Zoom window"><svg class="ic"><use href="#zm"/></svg></button><button class="btn tool" aria-label="Zoom dynamic"><svg class="ic"><use href="#zd"/></svg></button><button class="btn tool" aria-label="Zoom scale"><svg class="ic"><use href="#zs"/></svg></button><button class="btn tool" aria-label="Zoom center"><svg class="ic"><use href="#zd"/></svg></button><button class="btn tool" aria-label="Zoom object"><svg class="ic"><use href="#zo"/></svg></button><span class="vsep"></span><button class="btn tool" aria-label="Zoom in"><svg class="ic"><use href="#zp"/></svg></button><button class="btn tool" aria-label="Zoom out"><svg class="ic"><use href="#zn"/></svg></button><span class="vsep"></span><button class="btn tool" aria-label="Zoom all"><svg class="ic"><use href="#zo"/></svg></button><button class="btn tool" aria-label="Zoom extents"><svg class="ic"><use href="#zx"/></svg></button>
  </div>
  <div class="bar stybar">
    <button class="btn tool" aria-label="Text style"><svg class="ic"><use href="#abr"/></svg></button><select class="sty" aria-label="Text style"><option>CHU 2.5</option></select>
    <button class="btn tool" aria-label="Dimension style"><svg class="ic"><use href="#dbr"/></svg></button><select class="sty" aria-label="Dimension style"><option>ISO-2.5</option></select>
    <button class="btn tool" aria-label="Table style"><svg class="ic"><use href="#tbr"/></svg></button><select class="sty" aria-label="Table style"><option>Standard</option></select>
    <button class="btn tool" aria-label="Leader style"><svg class="ic"><use href="#lbr"/></svg></button><select class="sty" aria-label="Multileader style"><option>Standard</option></select>
  </div>
  <div class="bar vpbar ms-auto">
    <button class="btn tool" aria-label="Viewports"><svg class="ic"><use href="#vp4"/></svg></button><button class="btn tool" aria-label="Single viewport"><svg class="ic"><use href="#vp"/></svg></button><button class="btn tool" aria-label="Polygonal viewport"><svg class="ic"><use href="#vpl"/></svg></button><button class="btn tool" aria-label="Convert to viewport"><svg class="ic"><use href="#vpc"/></svg></button><button class="btn tool" aria-label="Clip viewport"><svg class="ic"><use href="#vpb"/></svg></button><select class="sty" aria-label="Viewport scale"><option></option></select>
  </div>
</div>

<div class="work d-flex flex-fill">
  <div class="canvas flex-fill position-relative">
    <svg class="dwg position-absolute w-100 h-100" viewBox="0 129 1258 545" preserveAspectRatio="xMinYMin meet" role="img" aria-label="Bracket drawing with dimensions">
      <path d="M525.500 120V680" stroke="#e03a3a" fill="none"/>
      <!-- centre lines -->
      <g class="axis">
        <path d="M308.500 204V265M308.500 273V282M308.500 290V350M308.500 381V424M308.500 434V442M308.500 450V500M308.500 509V517M308.500 525V567M198 304.500H258M267 304.500H275M283 304.500H333M341 304.500H350M358 304.500H413"/>
        <path d="M120 285.500H157M162 285.500H170M177 285.500H211M165.500 238V273M165.500 281V291M165.500 298V333M249 480.500H299M274.500 457V502"/>
      </g>
      <!-- dimensions -->
      <g class="dim">
        <path d="M165.500 187V238M308.500 187V204M91 285.500H132M91 304.500H222M91 387.500H170M91 480.500H274M91 555.500H223M223.500 555V629M274.500 480V599M308.500 567V599M358.500 555V629M97.500 285V305"/>
        <g marker-start="url(#arr)" marker-end="url(#arr)">
          <path d="M166 193.500H308"/><path d="M97.500 305V387"/><path d="M97.500 388V480"/><path d="M97.500 481V555"/>
          <path d="M224 593.500H274"/><path d="M275 593.500H308"/><path d="M224 623.500H358"/>
          <path d="M495 452L417 589"/><path d="M470 438L454 466"/><path d="M393 418L427 437"/><path d="M332 555A27 27 0 0 1 372.500 531.600"/>
        </g>
        <g marker-end="url(#arr)">
          <path d="M425 223.500H395.500L371.500 246"/><path d="M230 376L245 362"/>
          <path d="M447 364.500H417L356.500 331.500"/><path d="M244 269L261.500 278.500"/>
          <path d="M107 237.500H138L149.500 257.500"/><path d="M193 331L183 315.500"/>
          <path d="M213 233.500H185L173 266.500"/><path d="M152 323L159 304.500"/>
          <path d="M342 464.500H313L292 473.500"/><path d="M239 494.500L256 487.500"/>
          <path d="M239 517.500H260L270 492.500"/><path d="M286 452L279 468.500"/>
          <path d="M106 441.500H132L148.500 417.500"/><path d="M277 430.500H251L216.500 457.500"/>
          <path d="M156 474L175 429"/><path d="M335 427.500H355L372 433.500"/>
        </g>
        <path d="M371.500 246L245 362M356.500 331.500L261.500 278.500M149.500 257.500L183 315.500M173 266.500L159 304.500M292 473.500L256 487.500M270 492.500L279 468.500M148.500 417.500L169.500 387M216.500 457.500L186.500 480.500M372 433.500L383 437"/>
        <path d="M359 555L421 591M437 419L499.500 455M421 446L458.500 468M409.500 466L448.500 488.500M404 476L443.500 498M443.500 486L438.500 497M388 426L396.500 413M425 441L432 431M293.500 368V422M293 374A48 48 0 0 1 332.500 393"/>
      </g>
      <g>
        <text x="236" y="190">38</text><text x="118" y="234">Ø18</text><text x="201.500" y="230">Ø11</text><text x="412" y="220">Ø46</text><text x="434" y="361">Ø29</text><text x="330" y="461">Ø10</text><text x="247" y="514">Ø6</text>
        <text x="116" y="437">R10</text><text x="265" y="427">R10</text><text x="342" y="424">R3</text><text x="248" y="587">13,6</text><text x="291" y="589">9</text><text x="290" y="619">36</text>
        <text transform="translate(92.500 295.500) rotate(-90)">5</text><text transform="translate(92.500 346) rotate(-90)">22</text><text transform="translate(92.500 434) rotate(-90)">25</text><text transform="translate(92.500 518) rotate(-90)">20</text>
        <text transform="translate(158 461) rotate(-67)">R30</text><text transform="translate(318 375) rotate(19)">53,5°</text><text transform="translate(411.500 427) rotate(30)">10</text><text transform="translate(457 450) rotate(-60)">8,5</text><text transform="translate(438 488) rotate(-60)">3</text><text transform="translate(453 519) rotate(-60)">42</text><text transform="translate(343 529) rotate(-30)">120°</text>
      </g>
      <!-- dimensioned part -->
      <g class="obj">
        <circle cx="308.300" cy="304.300" r="86"/><circle cx="308.300" cy="304.300" r="54.300"/><circle cx="165.700" cy="285.700" r="33.800"/><circle cx="165.700" cy="285.700" r="20.700"/><circle cx="274.300" cy="480.300" r="18.700"/><circle cx="274.300" cy="480.300" r="11.400"/>
        <path d="M157.600 252.800L287.800 220.800M223.900 320.900L256 483.900M293 480V422L359 374"/>
        <path d="M132 285V387A37.400 37.400 0 0 0 160.300 423.300A112.200 112.200 0 0 1 213.600 454.500A37.400 37.400 0 0 1 223.700 480.300V555H358.700L376.700 524.300L343.500 505.500A11.200 11.200 0 0 1 354.500 486L387.300 505.300L393.300 495L360.500 476.500A11.200 11.200 0 0 1 371.500 457L404.300 476L409.700 466L377.500 447.500A11.200 11.200 0 0 1 388.500 427L421 446L436.700 419.300L359 374"/>
      </g>
      <circle cx="131.500" cy="531.500" r=".6"/>
      <!-- part being drawn -->
      <circle cx="835.500" cy="300.500" r="19.500" fill="#f6f200"/>
      <path class="axis" d="M858.500 269V519" stroke-dasharray="50 8 9 8" stroke-dashoffset="12"/>
      <g class="obj">
        <circle cx="858.300" cy="269" r="86"/><circle cx="858.300" cy="269" r="54.300"/><circle cx="716" cy="250.300" r="33.800"/><circle cx="716" cy="250.300" r="20.700"/><circle cx="824.300" cy="445" r="18.700"/><circle cx="824.300" cy="445" r="11.400"/>
        <path d="M707.600 217.500L837.800 185.500M773.900 285.600L806 448.600M682.300 250V519.500H922.500M682.300 351.700A37.400 37.400 0 0 0 710.300 388A112.200 112.200 0 0 1 763.600 419.200A37.400 37.400 0 0 1 773.700 445V519M843 371V445M824.300 445V519M808.500 413L909 339M757 344.500L858.300 269"/>
        <path d="M814.700 301.700L843 281M814.700 301.700Q822 312 836 318.500" stroke="#10107a"/>
      </g>
      <path d="M804 301.500H829M844 301.500H868M836.500 269V294M836.500 309V334M829.500 294.500h14v14h-14z" fill="none" stroke="#222"/>
      <!-- UCS icon -->
      <path d="M13.500 626V660.500H47M10.500 656.500h6v6h-6zM14.500 615.500l4.500 4.500 4.500-4.500M19 620v4.500M50 651l8.500 9M58.500 651L50 660" fill="none" stroke="#333"/>
    </svg>

    <div class="vplabel position-absolute">[−][Top][2D Wireframe]</div>

    <div class="cube position-absolute">
      <span></span><span class="ltr">N</span><span></span>
      <span class="ltr">W</span><button class="btn tool face">TOP</button><span class="ltr">E</span>
      <span></span><span class="ltr">S</span><span></span>
      <span></span><button class="btn tool wcs">WCS<span class="dn"></span></button><span></span>
    </div>
    <div class="nav-strip position-absolute"><svg width="22" height="142" viewBox="0 0 22 142"><circle cx="18" cy="4" r="2"/><circle cx="11" cy="21" r="7"/><circle cx="11" cy="21" r="4"/><path d="M4 14v6M10 34h2M0 38h22M6 50l-2-4 3 1v-5l2 4v-5l2 5v-5l2 5 2-3v6q0 6-5 6zM4 60l12 12M16 60L4 72M4 63v-3h3M16 63v-3h-3"/><circle cx="15" cy="70" r="3"/><path d="M10 80h2M11 86v14M4 93h14M7 90l-3 3 3 3M15 90l3 3-3 3M8 88l3-3 3 3M8 98l3 3 3-3M10 105h2M0 110h22M3 113h4v4H3zM9 113h4v4H9zM15 113h4v4h-4zM4 119h10v9H4zM7 121v5l4-2.500z"/><circle cx="18" cy="137" r="2"/></svg></div>

    <div class="cli position-absolute">
      <div class="hist d-flex flex-column align-items-start"><span>Select object to offset or [Exit/Undo] &lt;Exit&gt;: *Cancel*</span><span>Command: *Cancel*</span><span>Command: *Cancel*</span></div>
      <div class="cli-bar d-flex align-items-center">
        <div class="cli-grip d-flex align-items-center"><svg width="4" height="11" stroke="#aaa" stroke-dasharray="1 1"><path d="M1 0v11M3 0v11"/></svg><button class="btn tool" aria-label="Close command line"><svg width="6" height="6" stroke="#fff" stroke-width="1.500"><path d="M0 0l6 6M6 0L0 6"/></svg></button><button class="btn tool ps-1" aria-label="Customize"><svg width="9" height="9" viewBox="0 0 9 9"><path d="M4 4l4 4" stroke="#eee" stroke-width="2"/><path d="M1 0l2 2-1 1-2-2q0 4 3 4 3-1 2-4-2-2-4-1z" fill="#eee"/></svg></button></div>
        <svg class="ms-1" width="10" height="9" fill="#e8ecf0" stroke="#999"><path d="M.5.5h9v8h-9z"/><path d="M2 2.500l2 2-2 2M5 6.500h3"/></svg><span class="dn"></span>
        <input class="flex-fill ms-1" type="text" placeholder="Type a command" aria-label="Command">
        <svg class="me-1" width="4" height="3"><path d="M0 3l2-3 2 3z" fill="#333"/></svg>
      </div>
    </div>
  </div>
  <aside class="side">
    <div class="side-in">
      <button class="btn tool" aria-label="Linear"><svg class="ic"><use href="#d1"/></svg></button><button class="btn tool" aria-label="Aligned"><svg class="ic"><use href="#d2"/></svg></button><button class="btn tool" aria-label="Arc length"><svg class="ic"><use href="#d3"/></svg></button><button class="btn tool" aria-label="Ordinate"><svg class="ic"><use href="#d4"/></svg></button><hr>
      <button class="btn tool" aria-label="Radius"><svg class="ic"><use href="#d5"/></svg></button><button class="btn tool" aria-label="Jogged"><svg class="ic"><use href="#d6"/></svg></button><button class="btn tool" aria-label="Diameter"><svg class="ic"><use href="#d7"/></svg></button><button class="btn tool" aria-label="Angular"><svg class="ic"><use href="#d8"/></svg></button><hr>
      <button class="btn tool" aria-label="Quick dimension"><svg class="ic"><use href="#d9"/></svg></button><button class="btn tool" aria-label="Baseline"><svg class="ic"><use href="#d10"/></svg></button><button class="btn tool" aria-label="Continue"><svg class="ic"><use href="#d11"/></svg></button><button class="btn tool" aria-label="Space"><svg class="ic"><use href="#d12"/></svg></button><button class="btn tool" aria-label="Break"><svg class="ic"><use href="#d13"/></svg></button><hr>
      <button class="btn tool" aria-label="Tolerance"><svg class="ic"><use href="#d14"/></svg></button><button class="btn tool" aria-label="Center mark"><svg class="ic"><use href="#d15"/></svg></button><button class="btn tool" aria-label="Inspection"><svg class="ic"><use href="#d16"/></svg></button><button class="btn tool" aria-label="Jogged linear"><svg class="ic"><use href="#d17"/></svg></button><hr>
      <button class="btn tool" aria-label="Dimension edit"><svg class="ic"><use href="#d18"/></svg></button><button class="btn tool" aria-label="Text edit"><svg class="ic"><use href="#d19"/></svg></button><button class="btn tool" aria-label="Update"><svg class="ic"><use href="#d20"/></svg></button><hr>
      <button class="btn tool" aria-label="Style"><svg class="ic"><use href="#d21"/></svg></button>
    </div>
  </aside>
</div>

<footer class="foot d-flex align-items-start justify-content-between">
  <nav class="d-flex" aria-label="Layouts"><a class="ltab on d-flex" href="#">Model</a><a class="ltab d-flex" href="#">Layout1</a><a class="ltab d-flex" href="#">Layout2</a><button class="btn tool ltab add" aria-label="New layout"><svg width="6" height="6" stroke="#ddd"><path d="M3 0v6M0 3h6"/></svg></button></nav>
  <div class="stat d-flex">
    <div class="grp"><button class="btn tool text-white w-model">MODEL</button></div>
    <div class="grp"><button class="btn tool" aria-label="Grid"><svg width="10" height="10" stroke="#aaa"><path d="M0 1.500h10M0 4.500h10M0 7.500h10M1.500 0v10M4.500 0v10M7.500 0v10"/></svg></button><button class="btn tool" aria-label="Snap"><svg width="10" height="10" stroke="#888" stroke-dasharray="1 1"><path d="M.5 0v10M3.500 0v10M6.500 0v10M9.500 0v10"/></svg></button><button class="btn tool w-dn" aria-label="Snap options"><span class="dn"></span></button></div>
    <div class="grp"><button class="btn tool" aria-label="Ortho"><svg width="10" height="10" fill="none" stroke="#1d77d8"><path d="M1.500 0v9.500H10M1 6.500h3V10"/></svg></button><button class="btn tool" aria-label="Polar"><svg width="11" height="10" fill="none" stroke="#ccc"><circle cx="5" cy="5" r="4"/><path d="M5 5h5M5 5l3-3"/></svg></button><button class="btn tool w-dn" aria-label="Polar options"><span class="dn"></span></button><button class="btn tool" aria-label="Isodraft"><svg width="12" height="12" stroke="#bbb"><path d="M0 0l12 12M6 0v8M8 6l4-4"/></svg></button><button class="btn tool w-dn" aria-label="Isodraft options"><span class="dn"></span></button></div>
    <div class="grp"><button class="btn tool" aria-label="Tracking"><svg width="10" height="10" fill="none" stroke="#1d77d8" stroke-width="1.500"><path d="M9 1L1 9h9M4 5l2 4"/></svg></button><button class="btn tool" aria-label="Object snap"><svg width="11" height="11" fill="none" stroke="#1d77d8"><path d="M1.500 2.500h8v8h-8z"/><path d="M0 0h4v4H0z" fill="#184" stroke="none"/></svg></button><button class="btn tool w-dn" aria-label="Snap modes"><span class="dn"></span></button></div>
    <div class="grp"><button class="btn tool" aria-label="Lineweight"><svg width="11" height="10" stroke="#3f98f4" stroke-width="2"><path d="M0 1h11M0 5h11M0 8.500h7"/></svg></button></div>
    <div class="grp"><button class="btn tool" aria-label="Annotation visibility"><svg class="ic"><use href="#personb"/></svg></button><button class="btn tool" aria-label="Auto scale"><svg class="ic"><use href="#person"/></svg></button><button class="btn tool" aria-label="Annotation scale"><svg class="ic" viewBox="0 0 16 16"><path d="M8 1l2 8 5 5-7-3-7 3 5-5z" fill="#ccc"/></svg></button><button class="btn tool gap-1 w-scale">1:1<span class="dn"></span></button></div>
    <div class="grp"><button class="btn tool" aria-label="Workspace"><svg width="10" height="10" fill="none" stroke="#ccc"><circle cx="5" cy="5" r="2.500" stroke-width="2"/><path d="M5 0v2M5 8v2M0 5h2M8 5h2M1.500 1.500l1 1M7.500 7.500l1 1M8.500 1.500l-1 1M1.500 8.500l1-1"/></svg></button><button class="btn tool w-dn" aria-label="Workspace list"><span class="dn"></span></button></div>
    <div class="grp"><button class="btn tool" aria-label="Annotation monitor"><svg width="10" height="10" stroke="#ddd"><path d="M5 0v10M0 5h10"/></svg></button></div>
    <div class="grp"><button class="btn tool" aria-label="Isolate objects"><svg width="11" height="10" fill="none" stroke="#ccc"><path d="M.5.5h4v4h-4zM5 5.500l-3 4h5z"/><circle cx="8" cy="4" r="2"/></svg></button></div>
    <div class="grp"><button class="btn tool" aria-label="Graphics performance"><svg width="13" height="13"><circle cx="6.500" cy="6.500" r="6" fill="#0d62bc"/><path d="M4 9l5-5" stroke="#063a78"/></svg></button></div>
    <div class="grp"><button class="btn tool" aria-label="Trusted"><svg width="12" height="12"><path d="M2 1h6v6H2z" fill="#e8e8e8"/><path d="M2 4h8v3H2z" fill="#4a9be0"/><path d="M2 7h6v4H2z" fill="#f0dc50"/><path d="M7 8l4 2-4 2z" fill="#5cc040"/></svg></button></div>
    <div class="grp"><button class="btn tool" aria-label="Clean screen"><svg width="11" height="9" fill="none" stroke="#ccc"><path d="M.5.500h10v8H.5zM3 6l2-2M6 4l3-2M3 4v3h2M7 2h2v2"/></svg></button><button class="btn tool" aria-label="Customization"><svg width="10" height="9" stroke="#ddd"><path d="M0 1h10M0 4.500h10M0 8h10"/></svg></button></div>
  </div>
</footer>
</body>
</html>
